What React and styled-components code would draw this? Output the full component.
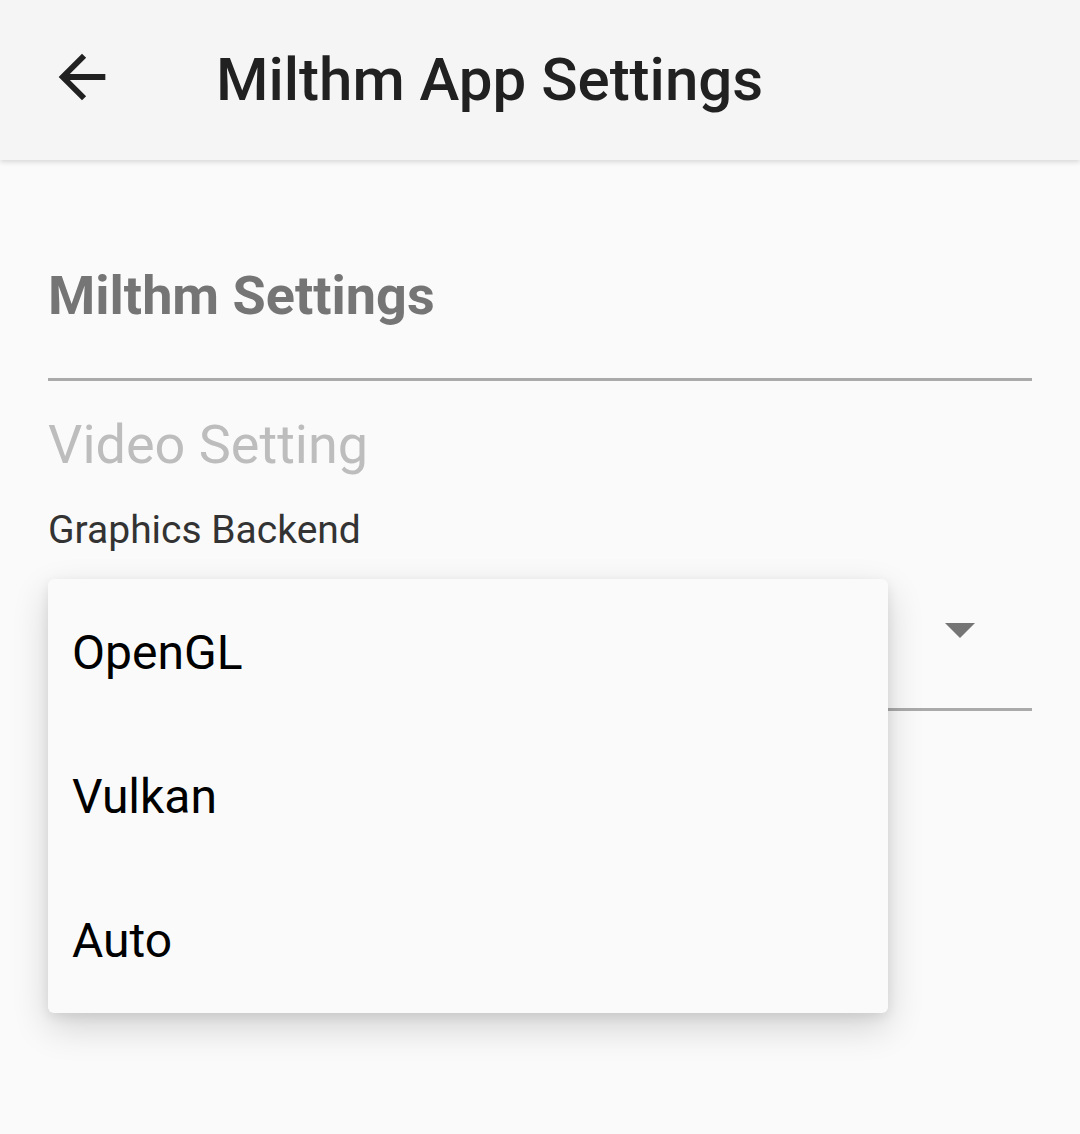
import React from 'react';
import styled, { createGlobalStyle } from 'styled-components';

const GlobalStyle = createGlobalStyle`
  html, body {
    margin: 0;
    padding: 0;
    background: #fafafa;
    font-family: Roboto, 'Noto Sans', sans-serif;
  }
`;

const Page = styled.div`
  width: 1080px;
  height: 1134px;
  overflow: hidden;
  background: #fafafa;
  display: flex;
  flex-direction: column;
`;

const AppBar = styled.header`
  height: 160px;
  flex-shrink: 0;
  display: flex;
  align-items: center;
  background: #f5f5f5;
  box-shadow: 0 2px 5px rgba(0, 0, 0, 0.14);
  position: relative;
  z-index: 2;
`;

const BackButton = styled.button`
  width: 70px;
  height: 70px;
  margin-left: 47px;
  margin-top: -6px;
  padding: 0;
  border: none;
  background: transparent;
  display: flex;
  color: #212121;
`;

const Title = styled.h1`
  margin: 0 0 0 99px;
  font-size: 60px;
  line-height: 60px;
  font-weight: 500;
  color: #212121;
`;

const Content = styled.main`
  padding: 108px 48px 0;
  display: flex;
  flex-direction: column;
`;

const SectionTitle = styled.h2`
  margin: 0;
  font-size: 54px;
  line-height: 56px;
  font-weight: 700;
  color: #757575;
`;

const Divider = styled.div`
  height: 3px;
  background: #aaaaaa;
  margin-top: 54px;
`;

const GroupTitle = styled.h3`
  margin: 37px 0 0;
  font-size: 54px;
  line-height: 54px;
  font-weight: 400;
  color: #bdbdbd;
`;

const FieldLabel = styled.label`
  margin-top: 38px;
  font-size: 39px;
  line-height: 40px;
  color: #333333;
`;

const SelectField = styled.div`
  position: relative;
  height: 161px;
  display: flex;
  align-items: flex-end;
`;

const SelectRow = styled.div`
  flex: 1;
  height: 161px;
  display: flex;
  justify-content: flex-end;
  align-items: center;
  padding-right: 57px;
  border-bottom: 3px solid #aaaaaa;
  box-sizing: border-box;
`;

const Caret = styled.span`
  width: 0;
  height: 0;
  margin-top: 2px;
  border-left: 15px solid transparent;
  border-right: 15px solid transparent;
  border-top: 15px solid #757575;
`;

const Menu = styled.ul`
  position: absolute;
  left: 0;
  top: 29px;
  width: 840px;
  margin: 0;
  padding: 2px 0 0;
  list-style: none;
  background: #fafafa;
  border-radius: 6px;
  box-shadow: 0 14px 36px rgba(0, 0, 0, 0.16), 0 4px 12px rgba(0, 0, 0, 0.08);
  z-index: 3;
`;

const MenuItem = styled.li`
  height: 144px;
  display: flex;
  align-items: center;
  padding-left: 24px;
  font-size: 48px;
  line-height: 48px;
  color: #000000;
`;

const options = ['OpenGL', 'Vulkan', 'Auto'];

const App = () => (
  <Page>
    <GlobalStyle />
    <AppBar>
      <BackButton aria-label="Back">
        <svg width="70" height="70" viewBox="0 0 24 24" fill="currentColor">
          <path d="M20 11H7.83l5.59-5.59L12 4l-8 8 8 8 1.41-1.41L7.83 13H20v-2z" />
        </svg>
      </BackButton>
      <Title>Milthm App Settings</Title>
    </AppBar>
    <Content>
      <SectionTitle>Milthm Settings</SectionTitle>
      <Divider />
      <GroupTitle>Video Setting</GroupTitle>
      <FieldLabel>Graphics Backend</FieldLabel>
      <SelectField>
        <SelectRow>
          <Caret />
        </SelectRow>
        <Menu>
          {options.map(opt => (
            <MenuItem key={opt}>{opt}</MenuItem>
          ))}
        </Menu>
      </SelectField>
    </Content>
  </Page>
);

export default App;
